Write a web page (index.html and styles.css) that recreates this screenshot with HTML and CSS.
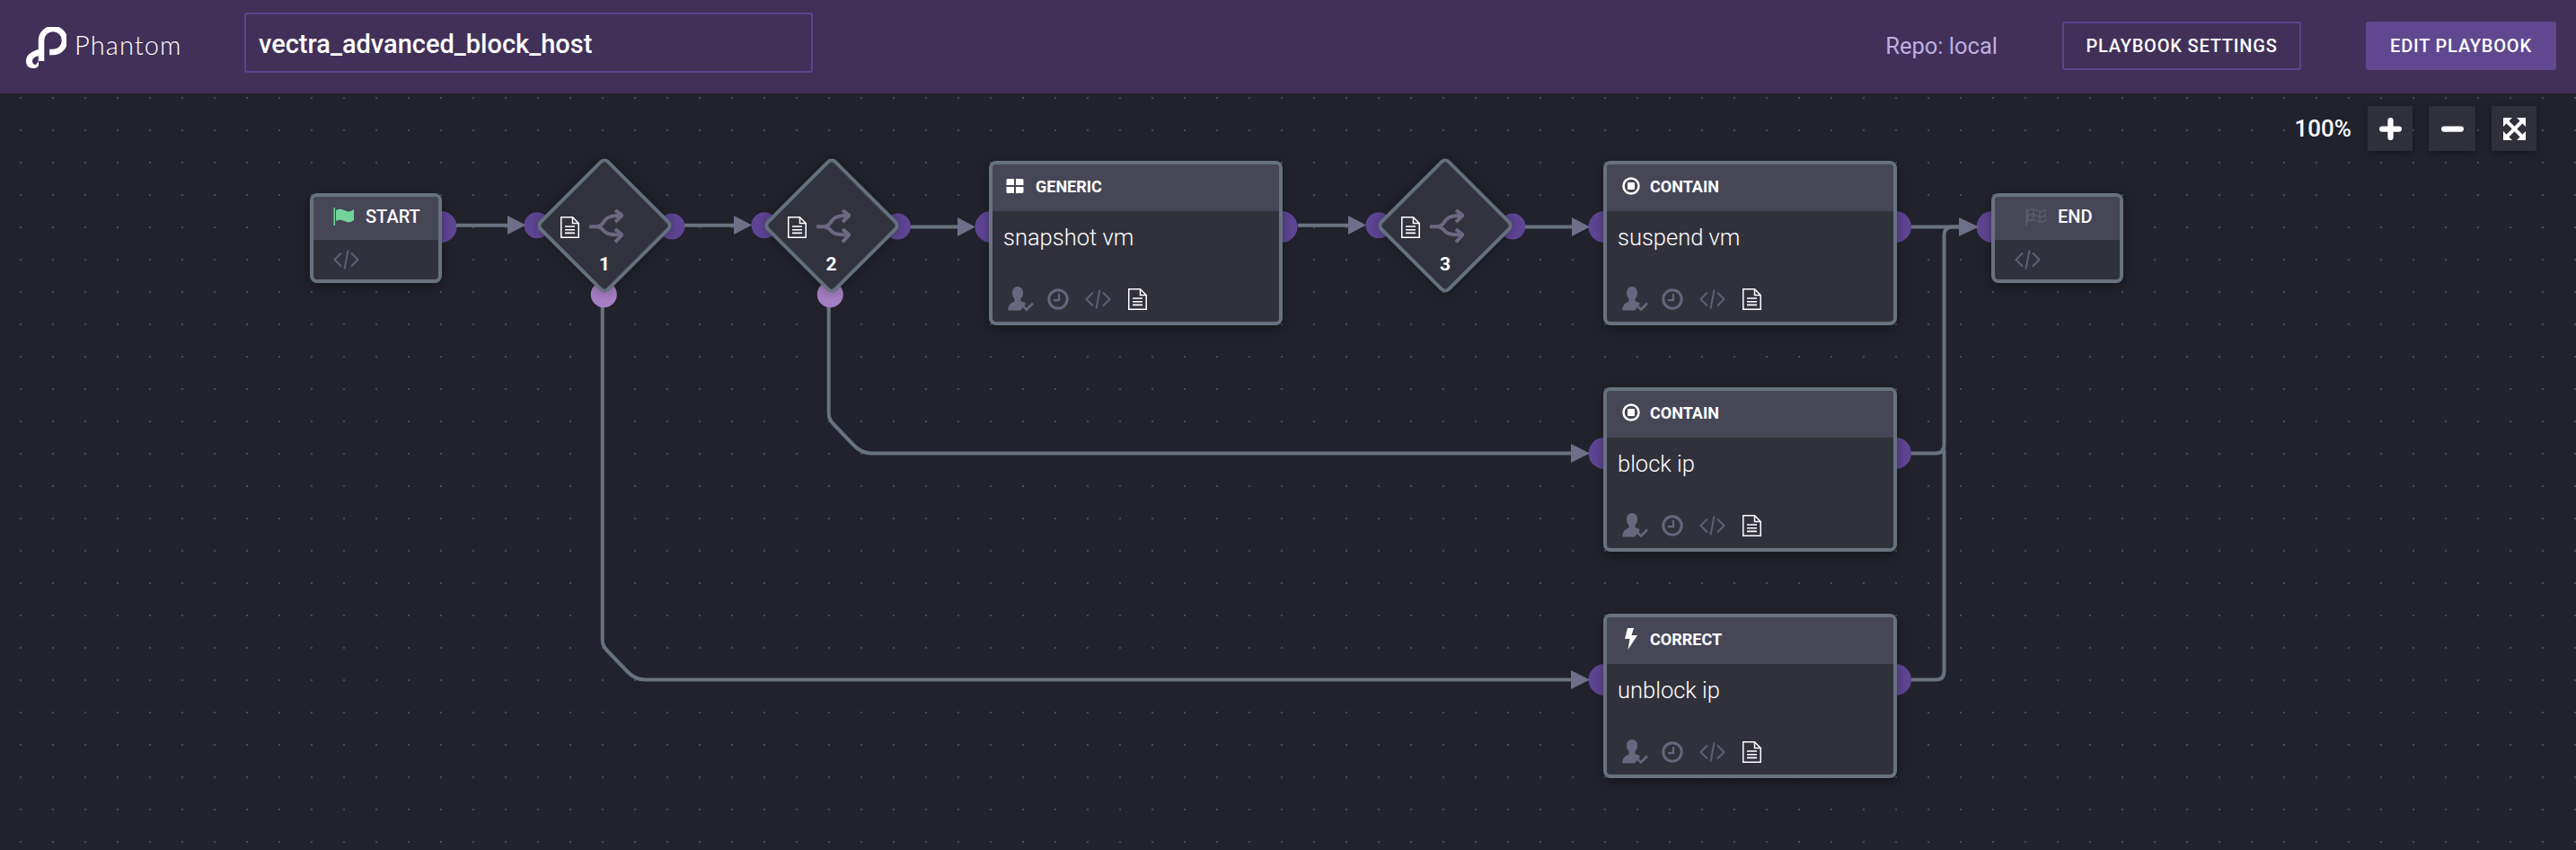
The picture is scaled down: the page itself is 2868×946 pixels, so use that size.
FILE: index.html
```html
<!DOCTYPE html>
<html lang="en">
<head>
  <meta charset="UTF-8" />
  <title>Phantom - vectra_advanced_block_host</title>
  <link rel="stylesheet" href="styles.css">
</head>
<body>
  <header class="topbar">
    <div class="logo">
      <svg class="logo-mark" viewBox="0 0 46 47">
        <path d="M18 38 V15 A13 13 0 1 1 31 28 H27" fill="none" stroke="#fff" stroke-width="6.5"/>
        <path d="M15 25 C7 27 1 31 1 38 C1 43 4 46 9 46 C13 46 15 44 15 42 L15 38 L12 42 C9 42 8 40 8 38 C8 35 11 33 15 32 Z" fill="#fff"/>
      </svg>
      <span class="logo-text">Phantom</span>
    </div>
    <div class="playbook-name">vectra_advanced_block_host</div>
    <div class="topbar-right">
      <span class="repo">Repo: local</span>
      <button class="btn btn-outline">PLAYBOOK SETTINGS</button>
      <button class="btn btn-solid">EDIT PLAYBOOK</button>
    </div>
  </header>

  <main class="canvas">
    <!-- viewBox keeps the page coordinates, the header is 104 high -->
    <svg class="wires" viewBox="0 104 2868 842">
      <defs>
        <symbol id="i-doc" viewBox="0 0 21 24">
          <path d="M.75.75H13.5L20.25 7.5V23.25H.75Z M13.5.75V7.5H20.25" fill="none" stroke="#fff" stroke-width="1.5"/>
          <path d="M5 11h11M5 14.7h11M5 18.4h11" stroke="#fff" stroke-width="1.6"/>
        </symbol>
        <symbol id="i-fork" viewBox="0 0 38 39">
          <path d="M0 19.3H8C14 19.3 15 15 18 11.5C21 8 26 6.7 36 6.7M8 19.3C14 19.3 15 23 18 25.5C21 28 26 28.3 36 28.3M29 1L36.5 6.7L29 14M29 22L36.5 28.3L29 36.5" fill="none" stroke="#6c6883" stroke-width="4"/>
        </symbol>
        <symbol id="i-code" viewBox="0 0 29 22">
          <path d="M9 3.5L1.5 11L9 18.5M20 3.5L27.5 11L20 18.5M16.5 .5L12.5 21.5" fill="none" stroke="#5f5f74" stroke-width="2"/>
        </symbol>
        <symbol id="i-clock" viewBox="0 0 24 24">
          <circle cx="12" cy="12" r="10.2" fill="none" stroke="#66667e" stroke-width="3"/>
          <path d="M13 6V13.2H7" fill="none" stroke="#66667e" stroke-width="2.2"/>
        </symbol>
        <symbol id="i-user" viewBox="0 0 29 27">
          <path d="M11 0C15 0 17 3 17 7C17 10 16 12 14.500 13.500V16C17 17 19 17.500 20 19L14 26.500H0.500C0 21 3 18.500 7.500 16.500V13.500C6 12 5 10 5 7C5 3 7 0 11 0Z" fill="#676780"/>
          <path d="M17 21.500L21 25.500L28 18.500" fill="none" stroke="#66687a" stroke-width="2.600"/>
        </symbol>
        <symbol id="i-flag-go" viewBox="0 0 23 20">
          <rect x=".5" width="1.500" height="20" fill="#72d39b"/>
          <path d="M3 3C8 0 12 3 15 4C18 5 20 4 23 2V14C20 16 18 17 15 16C12 15 8 12 3 15Z" fill="#72d39b"/>
        </symbol>
        <symbol id="i-flag-end" viewBox="0 0 23 20">
          <rect x=".5" width="1.500" height="20" fill="#5f5f74"/>
          <path d="M3 3C8 0 12 3 15 4C18 5 20 4 23 2V14C20 16 18 17 15 16C12 15 8 12 3 15Z M3 9C8 6 12 9 15 10C18 11 20 10 23 8M9 2V13M16 4V16" fill="none" stroke="#5f5f74" stroke-width="1.300"/>
        </symbol>
      </defs>

      <g class="ports">
        <circle cx="491" cy="252.500" r="17.500"/>
        <circle cx="598" cy="250.700" r="14.500"/>
        <circle cx="748" cy="252" r="14.500"/>
        <circle cx="851" cy="250.700" r="14.500"/>
        <circle cx="999.500" cy="252" r="14.500"/>
        <circle cx="1103" cy="252.500" r="17.500"/>
        <circle cx="1427" cy="252.500" r="17.500"/>
        <circle cx="1535" cy="250.700" r="14.500"/>
        <circle cx="1684" cy="252" r="14.500"/>
        <circle cx="1786" cy="252.500" r="17.500"/>
        <circle cx="2110.500" cy="252.500" r="17.500"/>
        <circle cx="1786" cy="504.500" r="17.500"/>
        <circle cx="2110.500" cy="504.500" r="17.500"/>
        <circle cx="1786" cy="756.500" r="17.500"/>
        <circle cx="2110.500" cy="756.500" r="17.500"/>
        <circle cx="2218" cy="252.500" r="17.500"/>
      </g>
      <g class="ports-alt">
        <circle cx="672.300" cy="327.700" r="14.500"/>
        <circle cx="924.300" cy="327.700" r="14.500"/>
      </g>

      <g class="lines">
        <path d="M508 250.700H568"/>
        <path d="M762 250.700H819"/>
        <path d="M1014 252.500H1068"/>
        <path d="M1445 250.700H1503"/>
        <path d="M1698 252.500H1752"/>
        <path d="M2128 252.500H2183"/>
        <path d="M922.700 342V460Q922.700 467 928 472L950 495Q959 504.500 970 504.500H1752"/>
        <path d="M670.700 342V712Q670.700 719 676 724L698 747Q707 756.500 718 756.500H1752"/>
        <path d="M2128 504.500H2155Q2164.500 504.500 2164.500 495V262Q2164.500 252.500 2174 252.500H2183"/>
        <path d="M2128 756.500H2155Q2164.500 756.500 2164.500 747V500"/>
      </g>

      <g class="arrows">
        <path d="M565 240L585.500 250.500L565 261Z"/>
        <path d="M817 240L837 250.500L817 261Z"/>
        <path d="M1066 242L1086 252.500L1066 263Z"/>
        <path d="M1501 240L1521 250.500L1501 261Z"/>
        <path d="M1750 242L1770 252.500L1750 263Z"/>
        <path d="M2181 242L2203 252.500L2181 263Z"/>
        <path d="M1749 494L1770 504.500L1749 515Z"/>
        <path d="M1749 746L1770 756.500L1749 767Z"/>
      </g>
    </svg>

    <div class="terminal terminal-start">
      <div class="node-head">
        <svg class="ic-flag"><use href="#i-flag-go"/></svg>
        <span class="terminal-title">START</span>
      </div>
      <div class="terminal-body"><svg class="ic-code"><use href="#i-code"/></svg></div>
    </div>

    <div class="decision decision-1">
      <div class="decision-icons">
        <svg class="ic-doc"><use href="#i-doc"/></svg>
        <svg class="ic-fork"><use href="#i-fork"/></svg>
      </div>
      <div class="decision-num">1</div>
    </div>

    <div class="decision decision-2">
      <div class="decision-icons">
        <svg class="ic-doc"><use href="#i-doc"/></svg>
        <svg class="ic-fork"><use href="#i-fork"/></svg>
      </div>
      <div class="decision-num">2</div>
    </div>

    <div class="action action-snapshot">
      <div class="node-head">
        <svg class="ic-type ic-grid" viewBox="0 0 19 16"><path d="M1 0H8.500V7H0V1ZM10.500 0H18L19 1V7H10.500ZM0 9H8.500V16H1L0 15ZM10.500 9H19V15L18 16H10.500Z" fill="#fff"/></svg>
        <span class="action-type">GENERIC</span>
      </div>
      <div class="action-name">snapshot vm</div>
      <div class="action-foot">
        <svg class="ic-user"><use href="#i-user"/></svg>
        <svg class="ic-clock"><use href="#i-clock"/></svg>
        <svg class="ic-code"><use href="#i-code"/></svg>
        <svg class="ic-doc"><use href="#i-doc"/></svg>
      </div>
    </div>

    <div class="decision decision-3">
      <div class="decision-icons">
        <svg class="ic-doc"><use href="#i-doc"/></svg>
        <svg class="ic-fork"><use href="#i-fork"/></svg>
      </div>
      <div class="decision-num">3</div>
    </div>

    <div class="action action-suspend">
      <div class="node-head">
        <svg class="ic-type" viewBox="0 0 20 20"><circle cx="10" cy="10" r="8.500" fill="none" stroke="#fff" stroke-width="2.500"/><rect x="6" y="6" width="8" height="8" rx="1" fill="#fff"/></svg>
        <span class="action-type">CONTAIN</span>
      </div>
      <div class="action-name">suspend vm</div>
      <div class="action-foot">
        <svg class="ic-user"><use href="#i-user"/></svg>
        <svg class="ic-clock"><use href="#i-clock"/></svg>
        <svg class="ic-code"><use href="#i-code"/></svg>
        <svg class="ic-doc"><use href="#i-doc"/></svg>
      </div>
    </div>

    <div class="action action-block">
      <div class="node-head">
        <svg class="ic-type" viewBox="0 0 20 20"><circle cx="10" cy="10" r="8.500" fill="none" stroke="#fff" stroke-width="2.500"/><rect x="6" y="6" width="8" height="8" rx="1" fill="#fff"/></svg>
        <span class="action-type">CONTAIN</span>
      </div>
      <div class="action-name">block ip</div>
      <div class="action-foot">
        <svg class="ic-user"><use href="#i-user"/></svg>
        <svg class="ic-clock"><use href="#i-clock"/></svg>
        <svg class="ic-code"><use href="#i-code"/></svg>
        <svg class="ic-doc"><use href="#i-doc"/></svg>
      </div>
    </div>

    <div class="action action-unblock">
      <div class="node-head">
        <svg class="ic-type ic-bolt" viewBox="0 0 14 24"><path d="M3 0H10L7.500 8H14L3.500 24L5.500 12H0Z" fill="#fff"/></svg>
        <span class="action-type">CORRECT</span>
      </div>
      <div class="action-name">unblock ip</div>
      <div class="action-foot">
        <svg class="ic-user"><use href="#i-user"/></svg>
        <svg class="ic-clock"><use href="#i-clock"/></svg>
        <svg class="ic-code"><use href="#i-code"/></svg>
        <svg class="ic-doc"><use href="#i-doc"/></svg>
      </div>
    </div>

    <div class="terminal terminal-end">
      <div class="node-head">
        <svg class="ic-flag"><use href="#i-flag-end"/></svg>
        <span class="terminal-title">END</span>
      </div>
      <div class="terminal-body"><svg class="ic-code"><use href="#i-code"/></svg></div>
    </div>

    <div class="zoom-bar">
      <span class="zoom-value">100%</span>
      <button class="zoom-btn">
        <svg class="zoom-icon" viewBox="0 0 24 24"><path d="M12 3V21M3 12H21" stroke="#fff" stroke-width="6" stroke-linecap="round"/></svg>
      </button>
      <button class="zoom-btn zoom-btn-wide">
        <svg class="zoom-icon" viewBox="0 0 24 24"><path d="M3 12H21" stroke="#fff" stroke-width="6" stroke-linecap="round"/></svg>
      </button>
      <button class="zoom-btn">
        <svg class="zoom-icon" viewBox="0 0 25 25"><path d="M4 4L21 21M21 4L4 21" stroke="#fff" stroke-width="4"/><path d="M0 0H10L0 10ZM25 0V10L15 0ZM0 25V15L10 25ZM25 25H15L25 15Z" fill="#fff"/></svg>
      </button>
    </div>
  </main>
</body>
</html>
```

FILE: styles.css
```css
* {
  box-sizing: border-box;
}

html, body {
  height: 100%;
}

body {
  margin: 0;
  display: flex;
  flex-direction: column;
  overflow: hidden;
  font-family: Roboto, "Liberation Sans", sans-serif;
  color: #fff;
  background: #21222b;
}

button {
  font-family: inherit;
  color: #fff;
  cursor: pointer;
}

/* top bar */
.topbar {
  flex: 0 0 104px;
  display: flex;
  align-items: center;
  padding: 0 22px 0 28px;
  background: #413058;
}

.logo {
  display: flex;
  align-items: center;
  width: 244px;
}

.logo-mark {
  width: 46px;
  height: 47px;
  margin-top: 2px;
}

.logo-text {
  margin: -5px 0 0 9px;
  font-family: Lato, sans-serif;
  font-weight: 300;
  font-size: 29px;
  letter-spacing: 1.1px;
}

.playbook-name {
  display: flex;
  align-items: center;
  width: 633px;
  height: 67px;
  padding: 2px 0 0 14px;
  border: 2px solid #5b4590;
  border-radius: 3px;
  font-size: 29px;
  font-weight: 500;
  margin-top: -9px;
}

.topbar-right {
  margin-left: auto;
  margin-top: -2px;
  display: flex;
  align-items: center;
}

.repo {
  margin-right: 72px;
  font-size: 25.5px;
  color: #bfaee0;
}

.btn {
  height: 54px;
  border-radius: 3px;
  font-size: 20px;
  font-weight: 500;
  letter-spacing: 0.8px;
}

.btn-outline {
  width: 266px;
  border: 2px solid #5b4590;
  background: transparent;
}

.btn-solid {
  width: 212px;
  margin-left: 72px;
  border: none;
  background: #5f488f;
}

/* canvas */
.canvas {
  position: relative;
  flex: 1;
  background-color: #21222b;
  background-image: radial-gradient(circle at 23px 5px, #4a4b57 1px, transparent 1.6px);
  background-size: 36px 36px;
}

.wires {
  position: absolute;
  left: 0;
  top: 0;
  width: 2868px;
  height: 842px;
}

.ports circle {
  fill: #5f4695;
}

.ports-alt circle {
  fill: #a57fc3;
}

.lines path {
  fill: none;
  stroke: #69737f;
  stroke-width: 4;
}

.arrows path {
  fill: #6f6f8a;
}

/* nodes */
.node-head {
  display: flex;
  align-items: center;
  background: #474657;
}

.terminal, .action {
  position: absolute;
  display: flex;
  flex-direction: column;
  border: 4px solid #68727f;
  border-radius: 8px;
  background: #31313c;
  box-shadow: 0 4px 14px rgba(0, 0, 0, 0.35);
  overflow: hidden;
}

.terminal {
  width: 147px;
  height: 100px;
  top: 111px;
}

.terminal .node-head {
  flex: 0 0 48px;
  padding-left: 22px;
}

.terminal-start {
  left: 345px;
}

.terminal-end {
  left: 2217px;
}

.terminal-end .node-head {
  padding-left: 34px;
}

.terminal-title {
  margin: -5px 0 0 13px;
  font-size: 20px;
  font-weight: 500;
}

.terminal-body {
  display: flex;
  align-items: center;
  flex: 1;
  padding-left: 22px;
}

.ic-flag {
  width: 23px;
  height: 20px;
  margin-top: -5px;
}

.ic-code {
  width: 29px;
  height: 22px;
}

.ic-doc {
  width: 21px;
  height: 24px;
}

.ic-fork {
  width: 38px;
  height: 39px;
}

.ic-user {
  width: 29px;
  height: 27px;
}

.ic-clock {
  width: 24px;
  height: 24px;
}

.action {
  width: 327px;
  height: 183px;
}

.action .node-head {
  flex: 0 0 52px;
  padding-left: 17px;
}

.action-snapshot {
  left: 1101px;
  top: 75px;
}

.action-suspend {
  left: 1785px;
  top: 75px;
}

.action-block {
  left: 1785px;
  top: 327px;
}

.action-unblock {
  left: 1785px;
  top: 579px;
}

.ic-type {
  width: 20px;
  height: 20px;
  margin-top: -4px;
}

.ic-grid {
  height: 16px;
  margin-left: -2px;
  margin-right: 2px;
}

.ic-bolt {
  height: 24px;
}

.action-type {
  margin: -3px 0 0 11px;
  font-size: 18px;
  font-weight: 700;
}

.action-name {
  padding: 13px 0 0 12px;
  font-size: 25.5px;
  font-weight: 300;
  line-height: 32px;
}

.action-foot {
  display: flex;
  align-items: center;
  gap: 18px;
  margin-top: auto;
  padding: 0 0 12px 17px;
}

.action-foot .ic-user {
  margin-right: -3px;
}

.action-foot .ic-code {
  margin-right: 1px;
}

.decision {
  position: absolute;
  top: 91.5px;
  width: 110px;
  height: 110px;
  padding: 37.5px 0 0 6px;
}

.decision::before {
  content: "";
  position: absolute;
  inset: 0;
  border: 4px solid #65707d;
  border-radius: 8px;
  background: #32323d;
  box-shadow: 0 0 14px rgba(0, 0, 0, 0.35);
  transform: rotate(45deg);
}

.decision-1 {
  left: 618px;
}

.decision-2 {
  left: 870.5px;
}

.decision-3 {
  left: 1554px;
}

.decision-icons {
  position: relative;
  display: flex;
  align-items: center;
  gap: 11px;
  width: 70px;
}

.decision-num {
  position: relative;
  margin: 10px 0 0 -6px;
  font-size: 21px;
  font-weight: 700;
  line-height: 24px;
  text-align: center;
}

/* zoom controls */
.zoom-bar {
  position: absolute;
  top: 14px;
  right: 44px;
  display: flex;
  align-items: center;
  gap: 18px;
}

.zoom-value {
  font-size: 26px;
  font-weight: 500;
}

.zoom-btn {
  display: flex;
  align-items: center;
  justify-content: center;
  width: 50px;
  height: 50px;
  padding: 0;
  border: none;
  background: #30303b;
  box-shadow: 0 2px 8px rgba(0, 0, 0, 0.3);
}

.zoom-btn-wide {
  width: 52px;
}

.zoom-icon {
  width: 25px;
  height: 25px;
}
```
